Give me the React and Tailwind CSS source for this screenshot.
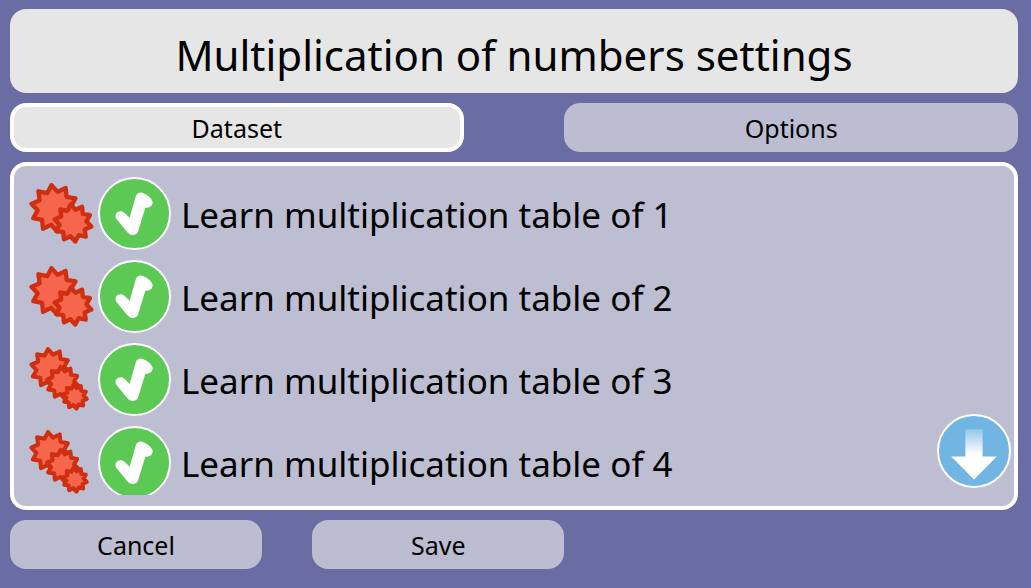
import { useRef, useState } from "react";

const ROWS = [
  { label: "Learn multiplication table of 1", level: 2 },
  { label: "Learn multiplication table of 2", level: 2 },
  { label: "Learn multiplication table of 3", level: 3 },
  { label: "Learn multiplication table of 4", level: 3 },
];

const STARS = {
  2: [
    [103, 109, 70],
    [159, 153, 56],
  ],
  3: [
    [91, 91, 58],
    [128, 134, 48],
    [165, 176, 36],
  ],
};

function starPoints(cx, cy, r) {
  return Array.from({ length: 20 }, (_, i) => {
    const radius = i % 2 === 0 ? r : r * 0.72;
    const angle = ((i * 18 - 97) * Math.PI) / 180;
    return `${(cx + radius * Math.cos(angle)).toFixed(1)},${(cy + radius * Math.sin(angle)).toFixed(1)}`;
  }).join(" ");
}

function Difficulty({ level }) {
  return (
    <svg viewBox="15 15 219 219" className="size-[73px] shrink-0" role="img" aria-label={`Difficulty ${level}`}>
      {STARS[level].map(([cx, cy, r]) => (
        <polygon
          key={cx}
          points={starPoints(cx, cy, r)}
          fill="#f6664c"
          stroke="#d02e10"
          strokeWidth={level === 2 ? 13 : 12}
          strokeLinejoin="round"
        />
      ))}
    </svg>
  );
}

function CheckRow({ label, level }) {
  const [checked, setChecked] = useState(true);
  return (
    <label className="flex shrink-0 cursor-pointer items-center">
      <Difficulty level={level} />
      <span className="grid size-[73px] shrink-0 place-items-center">
        <input
          type="checkbox"
          checked={checked}
          onChange={() => setChecked(!checked)}
          className="col-start-1 row-start-1 size-full appearance-none rounded-full border-2 border-white bg-[#b3b3b3] checked:bg-[#5bc954]"
        />
        {checked && (
          <svg viewBox="0 0 219 219" className="pointer-events-none col-start-1 row-start-1 size-full" aria-hidden="true">
            <path
              d="M80 108 C69 95 43 107 56 127 L88 166 C97 177 114 176 120 164 L142 92 C158 95 167 81 163 72 C158 60 147 54 136 49 C127 44 117 48 113 59 L95 122 Z"
              fill="#fff"
            />
          </svg>
        )}
      </span>
      <span className="ml-2.5 pt-0.5 text-[35px] leading-[48px]">{label}</span>
    </label>
  );
}

const BUTTON = "flex h-[49px] cursor-pointer items-center justify-center rounded-2xl text-[25px] leading-none";

export default function App() {
  const [tab, setTab] = useState("dataset");
  const list = useRef(null);
  const selected = "border-4 border-white bg-[#e6e6e6]";
  const idle = "bg-[#bcbdd1]";

  return (
    <div className="flex h-screen flex-col gap-2.5 bg-[#6a6da3] pt-[9px] pr-[13px] pb-[19px] pl-2.5 font-['Noto_Sans',sans-serif] text-black">
      <header className="flex h-[84px] shrink-0 items-center justify-center rounded-2xl bg-[#e6e6e6] pt-2">
        <h1 className="text-[42px] leading-[60px]">Multiplication of numbers settings</h1>
      </header>

      <nav className="flex shrink-0 justify-between">
        <button
          type="button"
          onClick={() => setTab("dataset")}
          className={`${BUTTON} w-[45%] ${tab === "dataset" ? selected : idle}`}
        >
          <span className="pt-0.5">Dataset</span>
        </button>
        <button
          type="button"
          onClick={() => setTab("options")}
          className={`${BUTTON} w-[45%] ${tab === "options" ? selected : idle}`}
        >
          <span className="pt-0.5">Options</span>
        </button>
      </nav>

      <main className="relative flex min-h-0 flex-1 flex-col rounded-2xl border-4 border-white bg-[#bdbed1] py-[11px] pr-2.5 pl-[11px]">
        <div ref={list} className="flex min-h-0 flex-1 flex-col gap-2.5 overflow-y-auto [scrollbar-width:none]">
          {ROWS.map((row) => (
            <CheckRow key={row.label} {...row} />
          ))}
        </div>
        <button
          type="button"
          aria-label="Scroll down"
          onClick={() => list.current.scrollBy({ top: 83, behavior: "smooth" })}
          className="absolute right-[3px] bottom-[18px] size-[74px] cursor-pointer rounded-full border-2 border-white bg-[#71b5e3]"
        >
          <svg viewBox="0 0 69 69" className="size-full" aria-hidden="true">
            <defs>
              <linearGradient id="arrow" x1="0" y1="0" x2="0" y2="1">
                <stop offset="0" stopColor="#fff" stopOpacity="0.25" />
                <stop offset="0.5" stopColor="#fff" />
              </linearGradient>
            </defs>
            <path d="M26 13 H43 V40 H57 L34.5 62.5 L12 40 H26 Z" fill="url(#arrow)" />
          </svg>
        </button>
      </main>

      <footer className="flex shrink-0 gap-[5%]">
        <button type="button" className={`${BUTTON} w-1/4 ${idle}`}>
          <span className="pt-0.5">Cancel</span>
        </button>
        <button type="button" className={`${BUTTON} w-1/4 ${idle}`}>
          <span className="pt-0.5">Save</span>
        </button>
      </footer>
    </div>
  );
}
